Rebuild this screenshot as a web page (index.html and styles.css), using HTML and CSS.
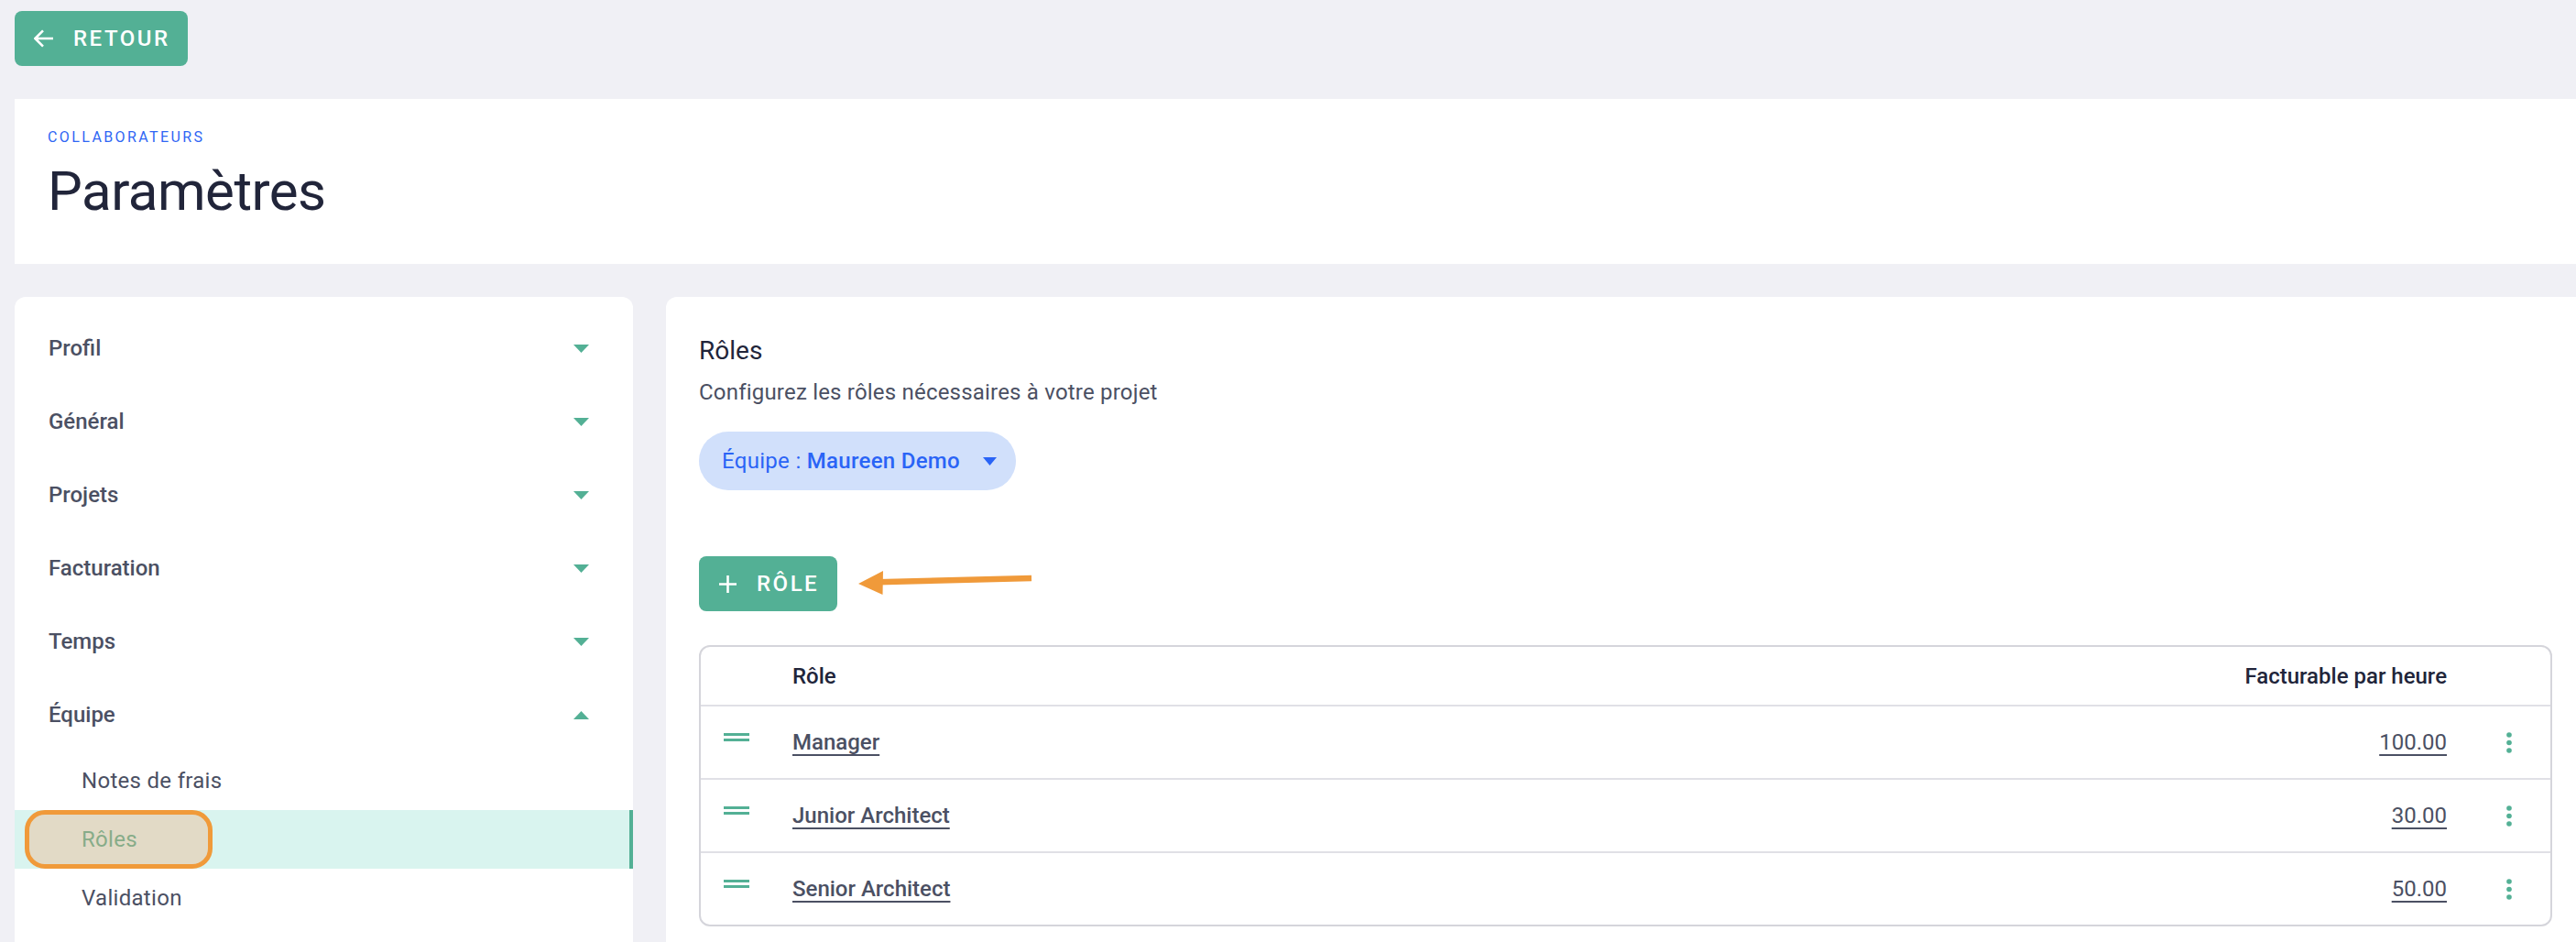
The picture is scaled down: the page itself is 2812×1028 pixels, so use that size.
FILE: index.html
```html
<!DOCTYPE html>
<html lang="fr">
<head>
<meta charset="utf-8">
<title>Paramètres – Rôles</title>
<link rel="stylesheet" href="styles.css">
</head>
<body>
<div class="page">
  <div class="topbar">
    <button class="btn btn-back" type="button">
      <svg class="ico" width="22" height="20" viewBox="0 0 22 20"><path d="M21 10H2M10 1.4L1.4 10L10 18.6" fill="none" stroke="#fff" stroke-width="2.6" stroke-linejoin="miter"/></svg>
      <span class="btn-text">Retour</span>
    </button>
  </div>

  <header class="head-card">
    <div class="overline">Collaborateurs</div>
    <h1 class="title">Paramètres</h1>
  </header>

  <div class="columns">
    <nav class="side-card">
      <ul class="menu">
        <li class="menu-item"><span>Profil</span><svg class="caret" width="17" height="9" viewBox="0 0 17 9"><path d="M0 0H17L8.5 9Z"/></svg></li>
        <li class="menu-item"><span>Général</span><svg class="caret" width="17" height="9" viewBox="0 0 17 9"><path d="M0 0H17L8.5 9Z"/></svg></li>
        <li class="menu-item"><span>Projets</span><svg class="caret" width="17" height="9" viewBox="0 0 17 9"><path d="M0 0H17L8.5 9Z"/></svg></li>
        <li class="menu-item"><span>Facturation</span><svg class="caret" width="17" height="9" viewBox="0 0 17 9"><path d="M0 0H17L8.5 9Z"/></svg></li>
        <li class="menu-item"><span>Temps</span><svg class="caret" width="17" height="9" viewBox="0 0 17 9"><path d="M0 0H17L8.5 9Z"/></svg></li>
        <li class="menu-item"><span>Équipe</span><svg class="caret" width="17" height="9" viewBox="0 0 17 9"><path d="M0 9H17L8.5 0Z"/></svg></li>
        <li class="sub-item">Notes de frais</li>
        <li class="sub-item active">Rôles<span class="mark"></span></li>
        <li class="sub-item">Validation</li>
      </ul>
    </nav>

    <main class="main-card">
      <h2 class="card-title">Rôles</h2>
      <p class="card-sub">Configurez les rôles nécessaires à votre projet</p>

      <div class="chip">
        <span class="chip-label">Équipe : <strong>Maureen Demo</strong></span>
        <svg width="15" height="9" viewBox="0 0 15 9"><path d="M0 0H15L7.5 9Z" fill="#2a64f6"/></svg>
      </div>

      <div class="actions">
        <button class="btn btn-add" type="button">
          <svg class="ico" width="19" height="19" viewBox="0 0 19 19"><path d="M9.5 0V19M0 9.5H19" stroke="#fff" stroke-width="2.6"/></svg>
          <span class="btn-text">Rôle</span>
        </button>
        <svg class="annot-arrow" width="192" height="36" viewBox="0 0 192 36"><path d="M22 17.2L190 13" stroke="#f09a3a" stroke-width="6.5" fill="none"/><path d="M1 19L28 5L27.5 31Z" fill="#f09a3a"/></svg>
      </div>

      <div class="table">
        <div class="tr th">
          <div class="c-handle"></div>
          <div class="c-name">Rôle</div>
          <div class="c-rate">Facturable par heure</div>
          <div class="c-act"></div>
        </div>
        <div class="tr">
          <div class="c-handle"><svg width="28" height="9" viewBox="0 0 28 9"><rect y="0" width="28" height="3"/><rect y="6" width="28" height="3"/></svg></div>
          <div class="c-name"><a class="link">Manager</a></div>
          <div class="c-rate"><a class="link">100.00</a></div>
          <div class="c-act"><svg width="6" height="23" viewBox="0 0 6 23"><circle cx="3" cy="3" r="2.8"/><circle cx="3" cy="11.5" r="2.8"/><circle cx="3" cy="20" r="2.8"/></svg></div>
        </div>
        <div class="tr">
          <div class="c-handle"><svg width="28" height="9" viewBox="0 0 28 9"><rect y="0" width="28" height="3"/><rect y="6" width="28" height="3"/></svg></div>
          <div class="c-name"><a class="link">Junior Architect</a></div>
          <div class="c-rate"><a class="link">30.00</a></div>
          <div class="c-act"><svg width="6" height="23" viewBox="0 0 6 23"><circle cx="3" cy="3" r="2.8"/><circle cx="3" cy="11.5" r="2.8"/><circle cx="3" cy="20" r="2.8"/></svg></div>
        </div>
        <div class="tr">
          <div class="c-handle"><svg width="28" height="9" viewBox="0 0 28 9"><rect y="0" width="28" height="3"/><rect y="6" width="28" height="3"/></svg></div>
          <div class="c-name"><a class="link">Senior Architect</a></div>
          <div class="c-rate"><a class="link">50.00</a></div>
          <div class="c-act"><svg width="6" height="23" viewBox="0 0 6 23"><circle cx="3" cy="3" r="2.8"/><circle cx="3" cy="11.5" r="2.8"/><circle cx="3" cy="20" r="2.8"/></svg></div>
        </div>
      </div>
    </main>
  </div>
</div>
</body>
</html>
```

FILE: styles.css
```css
* { box-sizing: border-box; }

html, body {
  margin: 0;
  height: 100%;
  overflow: hidden;
  background: #f0f0f5;
  font-family: Roboto, "Noto Sans", "Liberation Sans", sans-serif;
  color: #4b5063;
}

.page {
  padding: 12px 0 0 16px;
}

/* Buttons */
.btn {
  display: inline-flex;
  align-items: center;
  height: 60px;
  border: 0;
  border-radius: 8px;
  background: #53b095;
  color: #fff;
  font-family: Roboto, sans-serif;
  font-size: 24px;
  font-weight: 500;
  letter-spacing: 2.5px;
  text-transform: uppercase;
  cursor: pointer;
}
.btn .ico { flex: none; display: block; }
.btn-text { margin-right: -2.5px; line-height: 1; }

.btn-back {
  padding: 0 22px 0 21px;
  gap: 21px;
}

.btn-add {
  padding: 0 22px 0 22px;
  gap: 22px;
}

/* Header card */
.head-card {
  margin-top: 36px;
  height: 180px;
  background: #fff;
  padding: 30px 36px 0 36px;
}
.overline {
  font-size: 16px;
  line-height: 24px;
  letter-spacing: 2.4px;
  text-transform: uppercase;
  color: #2f66f4;
}
.title {
  margin: 11px 0 0 0;
  font-size: 60px;
  line-height: 72px;
  font-weight: 400;
  letter-spacing: -0.5px;
  color: #21253a;
}

/* Columns */
.columns {
  display: flex;
  gap: 36px;
  margin-top: 36px;
  align-items: flex-start;
}

.side-card {
  flex: none;
  width: 675px;
  height: 760px;
  background: #fff;
  border-radius: 12px;
  padding-top: 16px;
  overflow: hidden;
}
.menu {
  list-style: none;
  margin: 0;
  padding: 0;
}
.menu-item {
  height: 80px;
  display: flex;
  align-items: center;
  justify-content: space-between;
  padding: 0 48px 0 37px;
  font-size: 24px;
  line-height: 36px;
  font-weight: 500;
  color: #4b5063;
}
.caret { fill: #53b095; display: block; }

.sub-item {
  position: relative;
  height: 64px;
  display: flex;
  align-items: center;
  padding-left: 73px;
  font-size: 24px;
  line-height: 36px;
  font-weight: 400;
  letter-spacing: 0.3px;
  color: #4b5063;
}
.sub-item.active {
  background: #d9f4ef;
  border-right: 4px solid #53b095;
  color: #53b095;
}
.mark {
  position: absolute;
  left: 11px;
  top: 0;
  width: 205px;
  height: 64px;
  border: 5px solid #f09a3a;
  border-radius: 22px;
  background: rgba(245, 164, 112, 0.32);
}

/* Main card */
.main-card {
  flex: 1;
  min-height: 760px;
  background: #fff;
  border-radius: 12px 0 0 12px;
  padding: 40px 26px 36px 36px;
}
.card-title {
  margin: 0;
  font-size: 28px;
  line-height: 38px;
  font-weight: 400;
  color: #21253a;
}
.card-sub {
  margin: 8px 0 0 0;
  font-size: 24px;
  line-height: 36px;
  color: #4b5063;
  letter-spacing: 0.2px;
}

.chip {
  margin-top: 25px;
  display: inline-flex;
  align-items: center;
  gap: 25px;
  height: 64px;
  padding: 0 21px 0 25px;
  border-radius: 32px;
  background: #d1e0fb;
  color: #2a64f6;
  font-size: 24px;
  line-height: 36px;
  letter-spacing: 0.3px;
}
.chip svg { display: block; }
.chip strong { font-weight: 500; }

.actions {
  position: relative;
  margin-top: 72px;
  height: 60px;
}
.annot-arrow {
  position: absolute;
  left: 173px;
  top: 11px;
}

/* Table */
.table {
  margin-top: 37px;
  border: 2px solid #d5d5db;
  border-radius: 12px;
}
.tr {
  display: flex;
  align-items: center;
  height: 80px;
  border-bottom: 2px solid #e0e0e6;
}
.tr:last-child { border-bottom: 0; height: 78px; }
.tr.th {
  height: 65px;
  font-weight: 500;
  color: #21253a;
}
.c-handle {
  flex: none;
  width: 100px;
  padding-left: 25px;
  padding-bottom: 12px;
}
.c-handle svg { display: block; fill: #53b095; }
.c-name {
  flex: 1;
  font-size: 24px;
  line-height: 36px;
}
.c-rate {
  flex: none;
  font-size: 24px;
  line-height: 36px;
  text-align: right;
}
.c-act {
  flex: none;
  width: 113px;
  padding-left: 65px;
}
.c-act svg { display: block; fill: #53b095; }

.link {
  color: #4b5063;
  font-weight: 500;
  text-decoration: underline;
  text-decoration-thickness: 2px;
  text-underline-offset: 5px;
  cursor: pointer;
}
.c-rate .link { font-weight: 400; }
```
